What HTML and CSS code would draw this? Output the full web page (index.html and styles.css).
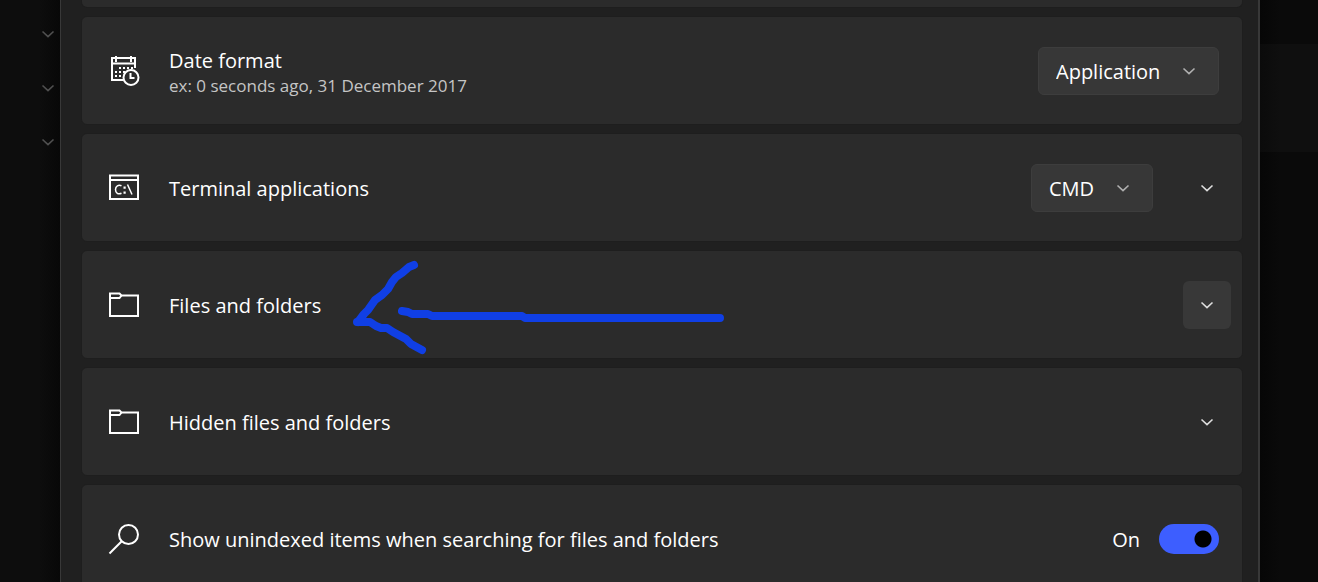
FILE: index.html
```html
<!DOCTYPE html>
<html lang="en">
<head>
<meta charset="utf-8">
<title>Settings</title>
<link rel="stylesheet" href="styles.css">
</head>
<body>
<svg class="defs" aria-hidden="true">
  <symbol id="chevron" viewBox="0 0 14 14"><path d="M1.500 4.500 7 9.700l5.500-5.200"/></symbol>
  <symbol id="folder" viewBox="0 0 32 32"><path d="M2 27V4.500h9.500l2 2H30V27z"/><path d="M2 9h9.500l2-2.500"/></symbol>
</svg>
<div class="window">
  <aside class="backdrop-left">
    <svg class="chevron"><use href="#chevron"/></svg>
    <svg class="chevron"><use href="#chevron"/></svg>
    <svg class="chevron"><use href="#chevron"/></svg>
  </aside>

  <main class="panel">
    <div class="card card-end"></div>

    <section class="card">
      <svg class="icon" viewBox="0 0 32 32">
        <path d="M15 25H4V3h23v10M4 8.500h23M8 1v6M23 1v6"/>
        <path class="dots" d="M11 13h14M7 17h12M7 21h9"/>
        <circle cx="23" cy="22.500" r="7.500"/>
        <path d="M22.500 18v5h4"/>
      </svg>
      <div class="text">
        <label class="title" for="date">Date format</label>
        <p class="note">ex: 0 seconds ago, 31 December 2017</p>
      </div>
      <div class="combo">
        <select id="date" class="select select-date"><option>Application</option></select>
        <svg class="chevron"><use href="#chevron"/></svg>
      </div>
    </section>

    <section class="card card-expander">
      <svg class="icon" viewBox="0 0 32 32">
        <path d="M2 3.500h28V27H2zM2 8h28"/>
        <path class="thin" d="M13.500 13.800C10.500 12.500 7.500 14 7.500 17.500s2.700 5.300 6 3.800M19.500 12.500l4.500 10"/>
        <path class="fill" d="M15.500 14.500h2.200v2.200h-2.200zM15.500 19.500h2.200v2.200h-2.200z"/>
      </svg>
      <div class="text"><label class="title" for="terminal">Terminal applications</label></div>
      <div class="combo">
        <select id="terminal" class="select select-terminal"><option>CMD</option></select>
        <svg class="chevron"><use href="#chevron"/></svg>
      </div>
      <button class="expand" type="button" aria-label="Expand terminal applications"><svg class="chevron"><use href="#chevron"/></svg></button>
    </section>

    <section class="card card-expander">
      <svg class="icon"><use href="#folder"/></svg>
      <div class="text"><h2 class="title">Files and folders</h2></div>
      <button class="expand expand-hover" type="button" aria-label="Expand files and folders"><svg class="chevron"><use href="#chevron"/></svg></button>
      <svg class="arrow" viewBox="0 0 380 98" aria-hidden="true">
        <path d="M64 7 59 9 52 15 46 19 42 24 38 31 32 37 25 42 18 52 14 56 8 64"/>
        <path d="M7 64H20L26 68 31 70H37L43 74 56 81 61 86 72 92"/>
        <path d="M52 53 58 54 62 56H78L82 58H172L175 60H370"/>
      </svg>
    </section>

    <section class="card card-expander">
      <svg class="icon"><use href="#folder"/></svg>
      <div class="text"><h2 class="title">Hidden files and folders</h2></div>
      <button class="expand" type="button" aria-label="Expand hidden files and folders"><svg class="chevron"><use href="#chevron"/></svg></button>
    </section>

    <section class="card">
      <svg class="icon" viewBox="0 0 32 32">
        <circle cx="20.500" cy="11.500" r="9.500"/>
        <path d="M13.700 18.300 1.500 30.500"/>
      </svg>
      <div class="text"><label class="title" for="unindexed">Show unindexed items when searching for files and folders</label></div>
      <span class="state">On</span>
      <input id="unindexed" class="toggle" type="checkbox" role="switch" checked>
    </section>
  </main>

  <aside class="backdrop-right"><div class="band"></div></aside>
</div>
</body>
</html>
```

FILE: styles.css
```css
* { box-sizing: border-box; }

body {
  margin: 0;
  overflow: hidden;
  background: #0a0a0a;
  color: #fff;
  font: 20px/28px "Open Sans", "Noto Sans", sans-serif;
}

.defs { position: absolute; width: 0; height: 0; }

.window {
  display: grid;
  grid-template-columns: 60px 1fr 58px;
  height: 100vh;
}

.backdrop-left {
  display: flex;
  flex-direction: column;
  align-items: flex-end;
  gap: 40px;
  padding: 27px 5px;
  background: linear-gradient(to right, #0d0d0d 40px, #080808);
  color: #505050;
}

.backdrop-right {
  padding-top: 44px;
  background: linear-gradient(to right, #060606, #0a0a0a 20px);
}

.band {
  height: 108px;
  background: linear-gradient(to right, #0b0b0b, #0f0f0f 20px);
}

.panel {
  display: flex;
  flex-direction: column;
  gap: 8px;
  padding: 0 15px 0 20px;
  border: solid #383838;
  border-width: 0 2px 0 1px;
  background: #202020;
  overflow: hidden;
}

.card {
  position: relative;
  display: flex;
  flex-shrink: 0;
  align-items: center;
  height: 109px;
  padding: 0 23px 0 26px;
  border: 1px solid #1e1e1e;
  border-radius: 6px;
  background: #2b2b2b;
}

.card-expander { padding-right: 11px; }

.card-end {
  height: 8px;
  border-top: 0;
  border-radius: 0 0 6px 6px;
}

.icon {
  width: 32px;
  height: 32px;
  fill: none;
  stroke: #fff;
  stroke-width: 2;
}

.icon .dots { stroke-dasharray: 2 2; }
.icon .thin { stroke-width: 1.5; }
.icon .fill { fill: #fff; stroke: none; }
.icon circle { fill: #2b2b2b; }

.text { flex: 1; padding: 3px 0 0 29px; }

.title {
  display: block;
  margin: 0;
  font-size: 20px;
  font-weight: 400;
  line-height: 28px;
}

.note {
  margin: 0;
  color: #c5c5c5;
  font-size: 17px;
  line-height: 22px;
}

.chevron {
  display: block;
  width: 14px;
  height: 14px;
  fill: none;
  stroke: currentColor;
  stroke-width: 1.6;
}

.combo { display: grid; align-items: center; color: #b0b0b0; }
.combo > * { grid-area: 1 / 1; }
.combo .chevron { justify-self: end; margin-right: 23px; pointer-events: none; }

.select {
  height: 48px;
  padding: 2px 48px 0 17px;
  border: 1px solid #3d3d3d;
  border-radius: 6px;
  appearance: none;
  background: #373737;
  color: #fff;
  font: inherit;
}

.select-date { width: 181px; }
.select-terminal { width: 122px; }

.expand {
  display: grid;
  place-items: center;
  width: 48px;
  height: 48px;
  padding: 0;
  border: 0;
  border-radius: 6px;
  background: transparent;
  color: #dedede;
}

.combo + .expand { margin-left: 30px; }
.expand-hover { background: #383838; }

.arrow {
  position: absolute;
  top: 7px;
  left: 268px;
  width: 380px;
  height: 98px;
  fill: none;
  stroke: #103fe5;
  stroke-width: 8;
  stroke-linecap: round;
  stroke-linejoin: round;
  pointer-events: none;
}

.state { padding-top: 3px; }

.toggle {
  width: 60px;
  height: 30px;
  margin: 0 0 0 19px;
  border-radius: 15px;
  appearance: none;
  background: radial-gradient(circle at 44px 15px, #000 8px, transparent 9px) #3d5eff;
}
```
